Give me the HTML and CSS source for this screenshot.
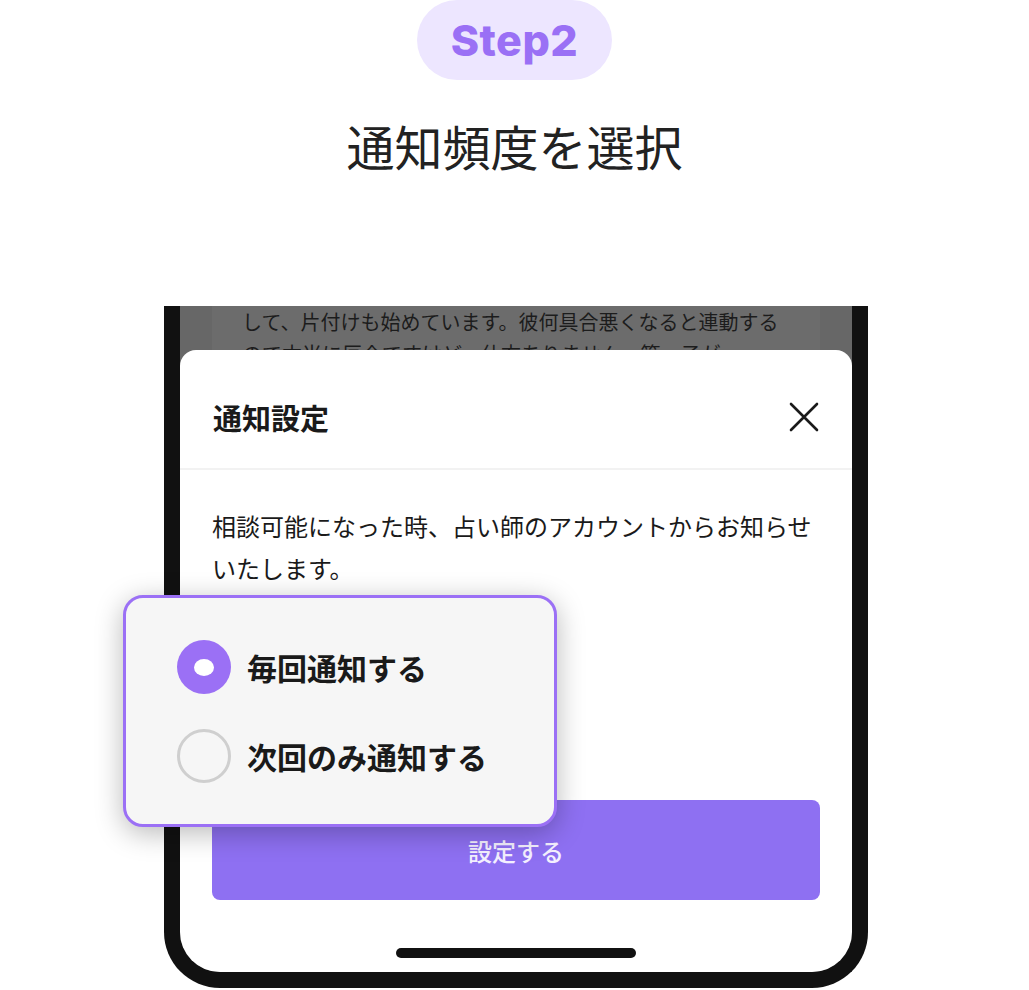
FILE: index.html
```html
<!DOCTYPE html>
<html>
  <head>
    <title>Step2 通知頻度を選択</title>
    <link rel="stylesheet" href="styles.css">
  </head>
  <body>
    <div class="step-head">
      <span class="step-badge">Step2</span>
      <h1 class="step-title">通知頻度を選択</h1>
    </div>

    <div class="phone">
      <div class="screen">
        <div class="bg-card">
          <p>して、片付けも始めています。彼何具合悪くなると連動するので本当に厄介ですけど、仕方ありません。第一子が</p>
        </div>
        <div class="modal">
          <div class="modal-header">
            <h2 class="modal-title">通知設定</h2>
            <button class="close-btn">
              <svg width="32" height="32" viewBox="0 0 32 32">
                <path d="M3 3 L29 29 M29 3 L3 29" stroke="#1a1a1a" stroke-width="2.6" stroke-linecap="round" fill="none" />
              </svg>
            </button>
          </div>
          <div class="modal-body">
            <p class="modal-text">相談可能になった時、占い師のアカウントからお知らせいたします。</p>
            <button class="submit-btn">設定する</button>
          </div>
          <div class="home-bar"></div>
        </div>
      </div>
    </div>

    <div class="option-callout">
      <div class="option-row">
        <span class="radio radio-checked"></span>
        <span class="option-label">毎回通知する</span>
      </div>
      <div class="option-row">
        <span class="radio"></span>
        <span class="option-label">次回のみ通知する</span>
      </div>
    </div>
  </body>
</html>
```

FILE: styles.css
```css
body {
  margin: 0;
  height: 990px;
  background: #fff;
  font-family: "Noto Sans CJK JP", "Noto Sans", sans-serif;
  color: #1a1a1a;
  position: relative;
  overflow: hidden;
}

.step-head {
  display: flex;
  flex-direction: column;
  align-items: center;
}
.step-badge {
  display: flex;
  align-items: center;
  justify-content: center;
  width: 195px;
  height: 80px;
  border-radius: 40px;
  background-color: #ede6ff;
  color: #9a70f5;
  font-family: Inter, "Liberation Sans", sans-serif;
  font-size: 43px;
  font-weight: 800;
  letter-spacing: 0.5px;
}
.step-title {
  margin: 32px 0 0;
  font-size: 48px;
  line-height: 67px;
  font-weight: 400;
  color: #222;
}

.phone {
  margin: 127px 0 0 164px;
  width: 704px;
  height: 682px;
  box-sizing: border-box;
  border: 16px solid #111;
  border-top: none;
  border-radius: 0 0 56px 56px;
  background-color: #111;
}
.screen {
  display: flex;
  flex-direction: column;
  height: 100%;
  background-color: #676767;
  border-radius: 0 0 40px 40px;
  overflow: hidden;
}
.bg-card {
  margin: 0 32px;
  height: 44px;
  flex-shrink: 0;
  overflow: hidden;
  background-color: #6c6c6c;
}
.bg-card p {
  margin: 0;
  padding: 0 30px;
  font-size: 20px;
  line-height: 32px;
  color: #1c1c1c;
}

.modal {
  flex: 1;
  display: flex;
  flex-direction: column;
  background-color: #fff;
  border-radius: 16px 16px 0 0;
}
.modal-header {
  display: flex;
  align-items: center;
  justify-content: space-between;
  height: 120px;
  box-sizing: border-box;
  padding: 16px 32px 0 33px;
  border-bottom: 2px solid #f2f2f2;
}
.modal-title {
  margin: 0;
  font-size: 29px;
  font-weight: 700;
}
.close-btn {
  width: 32px;
  height: 32px;
  padding: 0;
  border: none;
  background: none;
}
.close-btn svg {
  display: block;
}

.modal-body {
  padding: 35px 32px 0;
}
.modal-text {
  margin: 0;
  font-size: 24px;
  line-height: 42px;
  color: #1a1a1a;
}
.submit-btn {
  display: block;
  width: 100%;
  height: 100px;
  margin-top: 211px;
  border: none;
  border-radius: 8px;
  background-color: #8e70f2;
  color: #f4f0ff;
  font-family: "Noto Sans CJK JP", sans-serif;
  font-size: 24px;
  font-weight: 500;
}
.home-bar {
  width: 240px;
  height: 10px;
  margin: 48px auto 0;
  border-radius: 5px;
  background-color: #111;
}

.option-callout {
  position: absolute;
  left: 123px;
  top: 595px;
  width: 434px;
  height: 232px;
  box-sizing: border-box;
  padding: 42px 0 0 51px;
  display: flex;
  flex-direction: column;
  gap: 35px;
  border: 3px solid #9b70f5;
  border-radius: 20px;
  background-color: #f6f6f6;
  box-shadow: 0 6px 28px rgba(0, 0, 0, 0.28);
}
.option-row {
  display: flex;
  align-items: center;
  gap: 16px;
  height: 54px;
}
.radio {
  width: 54px;
  height: 54px;
  box-sizing: border-box;
  border: 3px solid #cfcfcf;
  border-radius: 50%;
  display: flex;
  align-items: center;
  justify-content: center;
}
.radio-checked {
  border: none;
  background-color: #9b70f5;
}
.radio-checked::after {
  content: "";
  width: 20px;
  height: 17px;
  border-radius: 50%;
  background-color: #fff;
}
.option-label {
  font-size: 30px;
  font-weight: 700;
  color: #1a1a1a;
}
```
